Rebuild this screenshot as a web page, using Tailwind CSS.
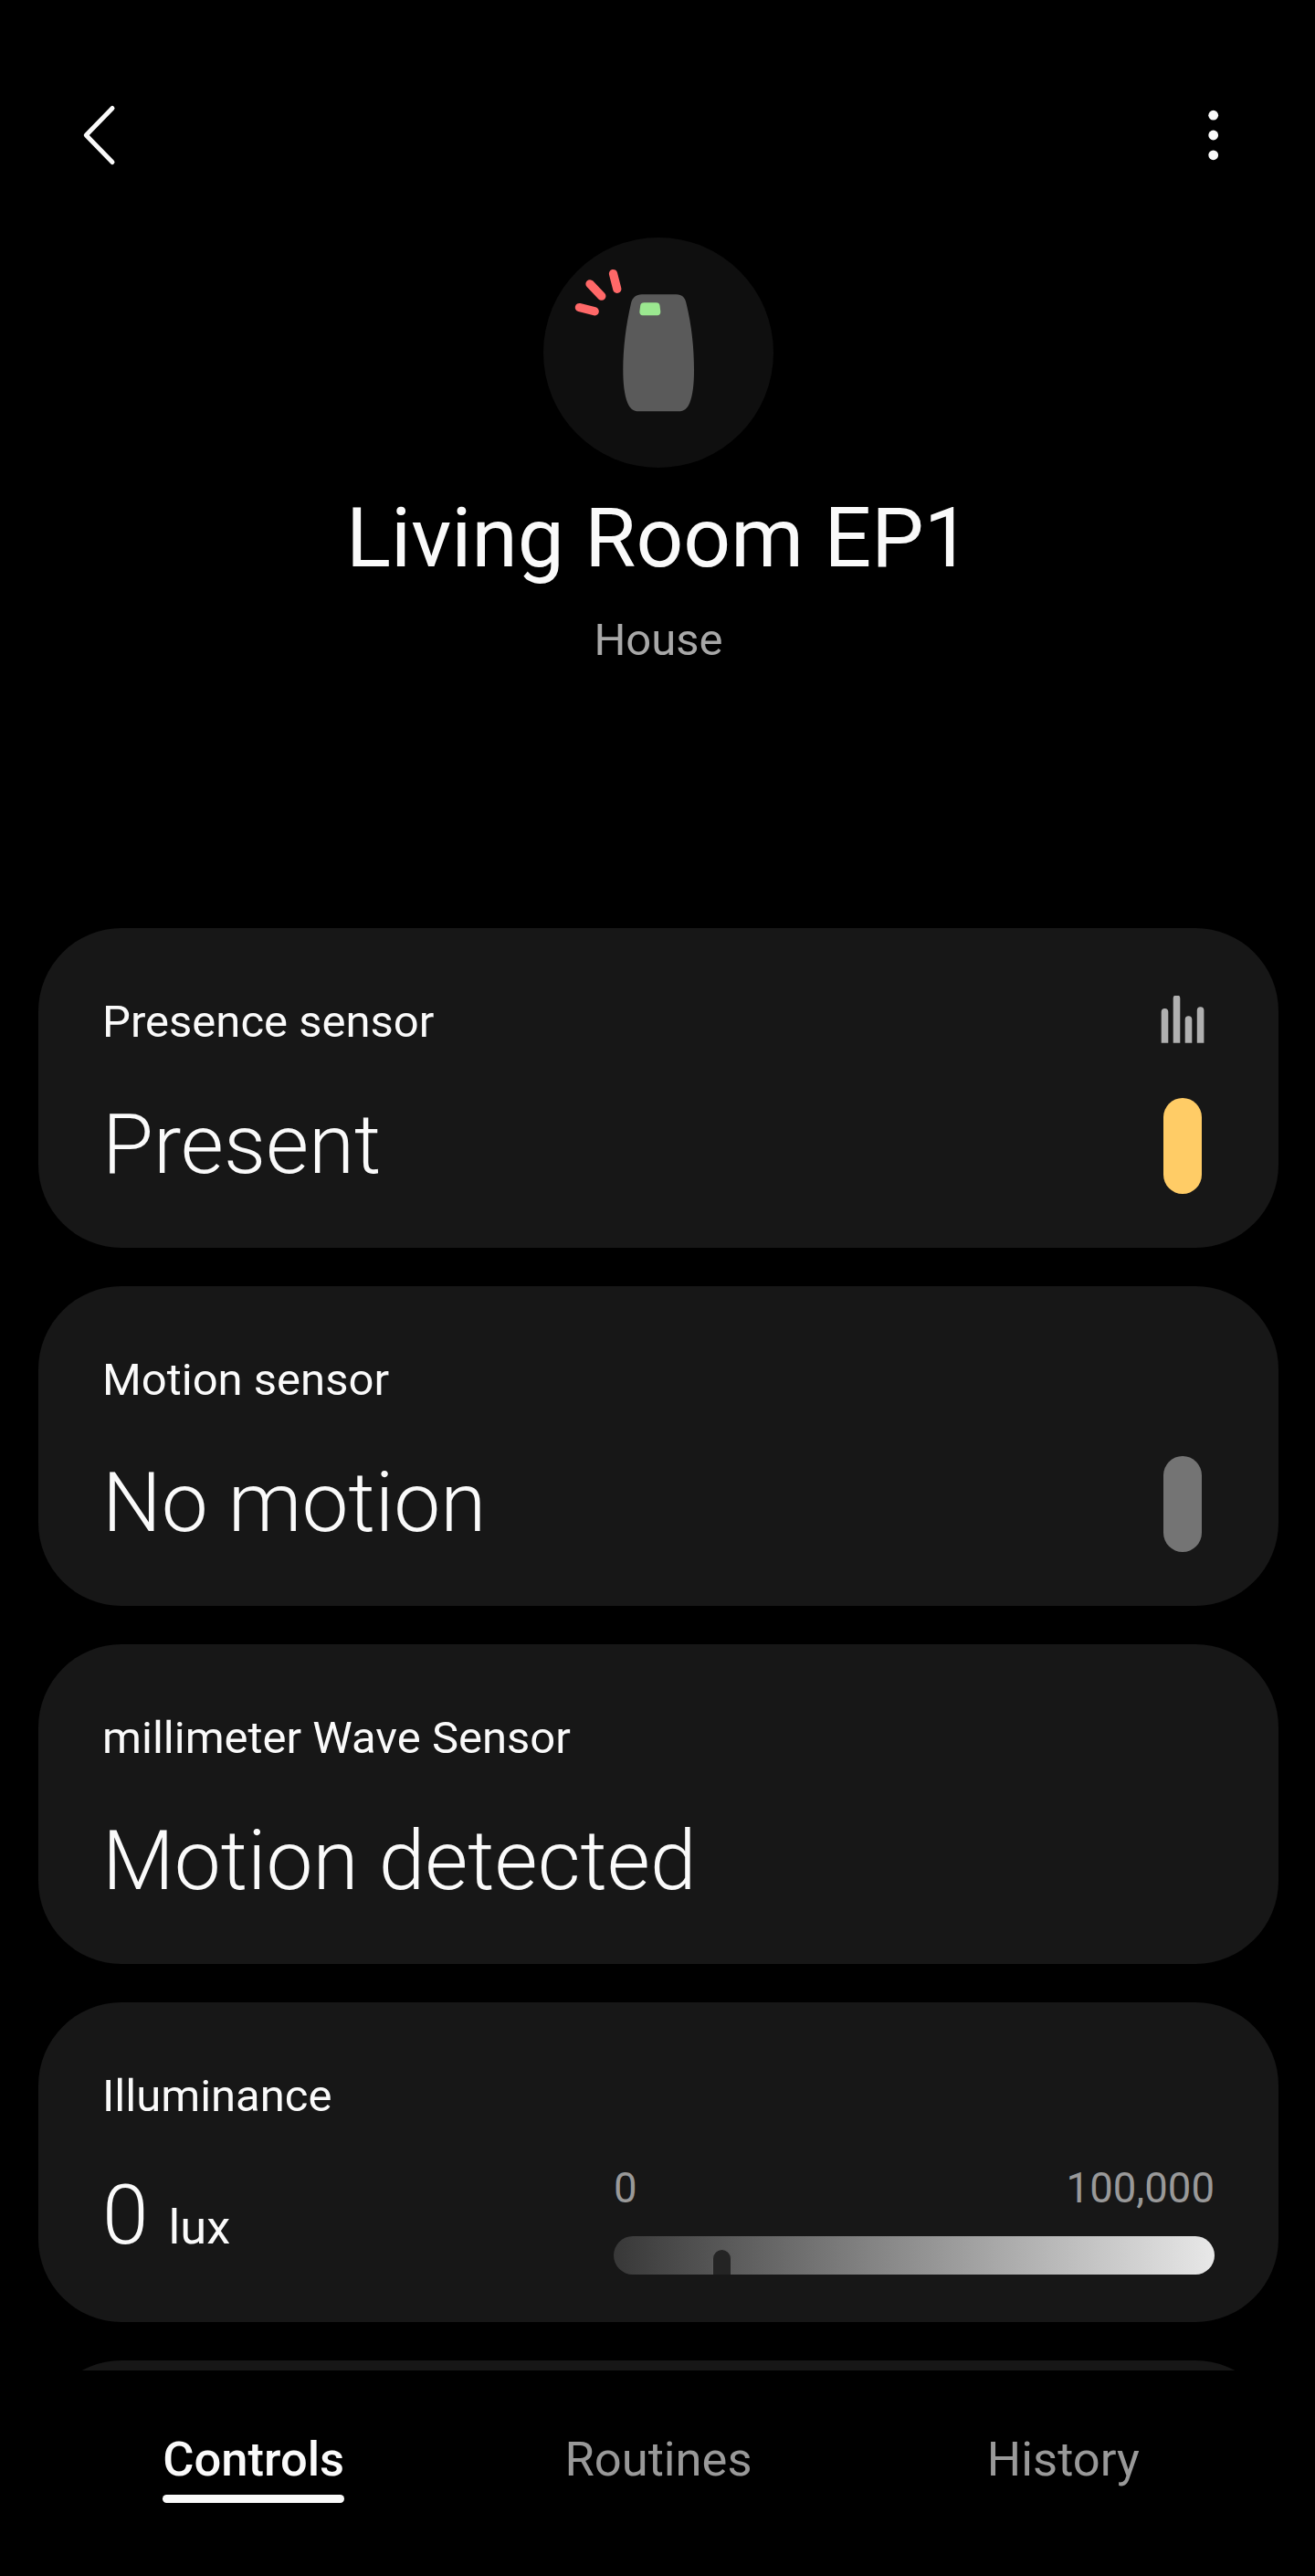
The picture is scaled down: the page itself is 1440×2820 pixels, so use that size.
<!DOCTYPE html>
<html lang="en">
<head>
<meta charset="utf-8">
<title>Living Room EP1</title>
<script src="https://cdn.jsdelivr.net/npm/@tailwindcss/browser@4"></script>
</head>
<body class="bg-black">
<div class="flex h-[2820px] w-[1440px] flex-col overflow-hidden bg-black font-['Roboto',sans-serif] text-[#fafafa]">

  <header class="flex h-[260px] shrink-0 items-start justify-between pt-[112px] pr-[104px] pl-[88px]">
    <button aria-label="Back" class="block">
      <svg class="block" width="42" height="72" viewBox="0 0 42 72" fill="none" stroke="#fafafa" stroke-width="5" stroke-linecap="round" stroke-linejoin="round"><path d="M35 6.500 6.300 36 35 65.500"/></svg>
    </button>
    <button aria-label="More options" class="block">
      <svg class="block" width="14" height="72" viewBox="0 0 14 72" fill="#fafafa"><circle cx="6.700" cy="14.200" r="5.400"/><circle cx="6.700" cy="36" r="5.400"/><circle cx="6.700" cy="57.800" r="5.400"/></svg>
    </button>
  </header>

  <main class="flex min-h-0 flex-1 flex-col overflow-hidden pr-[40px] pl-[42px]">
    <section class="flex h-[756px] shrink-0 flex-col items-center">
      <div class="size-[252px] rounded-full bg-[#0f0f0f]">
        <svg class="block" width="252" height="252" viewBox="0 0 252 252">
          <path fill="#5a5a5a" d="M108 62.300h37.500c6.500 0 9.700 3.600 11 9.700 6 24.500 8.500 49 8.500 73 0 15-1.200 27-4.700 36-2.300 6-6.300 9.300-12.300 9.300h-43.500c-6 0-10-3.300-12.300-9.300-3.500-9-4.900-21-4.900-36 0-24 3.200-49.500 8.700-73 1.500-6.100 5.500-9.700 12-9.700z"/>
          <path fill="#9be890" d="M110.500 71.300h13c2.600 0 3.600 1 4 3.300l.8 6.500c.2 2.700-1 4.200-3.500 4.200h-16c-2.500 0-3.600-1.500-3.400-4.200l.8-6.500c.4-2.300 1.700-3.300 4.300-3.300z"/>
          <g stroke="#ff6868" stroke-width="9.300" stroke-linecap="round"><path d="M76.500 39.600 80.800 56.300"/><path d="M51 50.800 63.800 64.200"/><path d="M39.400 76.600 56.200 80.800"/></g>
        </svg>
      </div>
      <h1 class="mt-6 text-[91px] leading-[106px] font-normal">Living Room EP1</h1>
      <p class="mt-[30px] text-[49px] leading-[57px] text-[#a8a8a8]">House</p>
    </section>

    <section class="flex flex-col gap-[42px]">
      <article class="flex h-[350px] shrink-0 justify-between rounded-[91px] bg-[#171717] pt-[74px] pr-[80px] pl-[70px]">
        <div>
          <h2 class="text-[49px] leading-[57px]">Presence sensor</h2>
          <p class="mt-[53px] text-[91px] leading-[106px] font-light">Present</p>
        </div>
        <div class="flex w-[50px] flex-col items-center">
          <svg class="block" width="50" height="52" viewBox="0 0 50 52" fill="#b0b0b0"><path d="M1.700 51.700V17.800a3.800 3.800 0 0 1 7.600 0v33.900zM14.700 51.700V3a3.800 3.800 0 0 1 7.600 0v48.700zM27.700 51.700V26a3.800 3.800 0 0 1 7.600 0v25.700zM40.800 51.700V16a3.800 3.800 0 0 1 7.600 0v35.700z"/></svg>
          <div class="mt-[60px] h-[105px] w-[42px] rounded-full bg-[#ffcc66]"></div>
        </div>
      </article>

      <article class="flex h-[350px] shrink-0 justify-between rounded-[91px] bg-[#171717] pt-[74px] pr-[84px] pl-[70px]">
        <div>
          <h2 class="text-[49px] leading-[57px]">Motion sensor</h2>
          <p class="mt-[53px] text-[91px] leading-[106px] font-light">No motion</p>
        </div>
        <div class="mt-[112px] h-[105px] w-[42px] rounded-full bg-[#747474]"></div>
      </article>

      <article class="h-[350px] shrink-0 rounded-[91px] bg-[#171717] pt-[74px] pl-[70px]">
        <h2 class="text-[49px] leading-[57px]">millimeter Wave Sensor</h2>
        <p class="mt-[53px] text-[91px] leading-[106px] font-light">Motion detected</p>
      </article>

      <article class="flex h-[350px] shrink-0 justify-between rounded-[91px] bg-[#171717] pt-[74px] pr-[70px] pl-[70px]">
        <div>
          <h2 class="text-[49px] leading-[57px]">Illuminance</h2>
          <p class="mt-[49px] flex items-baseline gap-[22px]"><span class="text-[91px] leading-[106px] font-light">0</span><span class="text-[52.5px] leading-[62px]">lux</span></p>
        </div>
        <div class="w-[658px] pt-[103px]">
          <div class="flex justify-between text-[45.5px] leading-[54px] text-[#999]"><span>0</span><span>100,000</span></div>
          <div class="mt-[25px] flex h-[42px] items-end rounded-full bg-linear-to-r/srgb from-[#383838] to-[#e8e8e8] pl-[108px]">
            <div class="h-[28px] w-[21px] rounded-t-full border-x border-t border-[#5a5a5a] bg-[#242424]"></div>
          </div>
        </div>
      </article>

      <article class="h-[350px] shrink-0 rounded-[91px] bg-[#171717]"></article>
    </section>
  </main>

  <nav class="h-[225px] shrink-0 bg-black pt-[66px] pr-[54px] pl-14 text-[52.5px] leading-[62px] text-[#999]">
    <div class="grid grid-cols-3 justify-items-center">
      <a class="font-medium text-[#fafafa]">Controls<span class="mt-2 block h-[9px] rounded-full bg-[#fafafa]"></span></a>
      <a>Routines</a>
      <a>History</a>
    </div>
  </nav>
</div>
</body>
</html>
